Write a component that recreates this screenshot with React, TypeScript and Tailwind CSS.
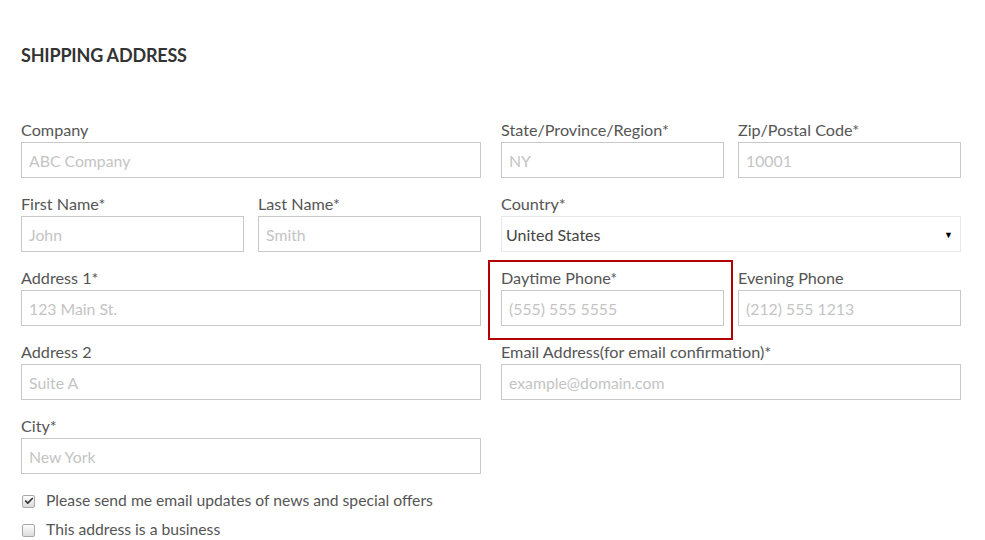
import { Check } from "lucide-react";

function Field({
  label,
  placeholder,
}: {
  label: string;
  placeholder: string;
}) {
  return (
    <div className="flex flex-col">
      <label className="text-[16.2px] leading-5 text-[#555] mb-[2px]">{label}</label>
      <div className="h-9 border border-[#c8c8c8] bg-white px-[7px] pt-[2px] flex items-center text-[15.8px] text-[#c4c4c4]">
        {placeholder}
      </div>
    </div>
  );
}

function Box({ checked }: { checked?: boolean }) {
  return (
    <span className="w-[13px] h-[13px] rounded-[2px] border border-[#a8a8a8] bg-gradient-to-b from-[#fdfdfd] to-[#dcdcdc] flex items-center justify-center">
      {checked && <Check size={10} strokeWidth={4} className="text-[#333]" />}
    </span>
  );
}

export default function App() {
  return (
    <div className="w-[985px] h-[540px] bg-white px-[21px] pt-[44px] font-['Lato',sans-serif] overflow-hidden">
      <h2 className="text-[18px] leading-[22px] font-bold text-[#333] tracking-[-0.2px]">SHIPPING ADDRESS</h2>

      <div className="w-[940px] grid grid-cols-2 gap-x-5 mt-[54px]">
        <div className="flex flex-col gap-4">
          <Field label="Company" placeholder="ABC Company" />
          <div className="grid grid-cols-2 gap-x-[14px]">
            <Field label="First Name*" placeholder="John" />
            <Field label="Last Name*" placeholder="Smith" />
          </div>
          <Field label="Address 1*" placeholder="123 Main St." />
          <Field label="Address 2" placeholder="Suite A" />
          <Field label="City*" placeholder="New York" />
        </div>

        <div className="flex flex-col gap-4">
          <div className="grid grid-cols-2 gap-x-[14px]">
            <Field label="State/Province/Region*" placeholder="NY" />
            <Field label="Zip/Postal Code*" placeholder="10001" />
          </div>
          <div className="flex flex-col">
            <label className="text-[16.2px] leading-5 text-[#555] mb-[2px]">Country*</label>
            <div className="h-9 border border-[#e8e8e8] bg-white pl-[4px] pr-[7px] pt-[2px] flex items-center justify-between text-[16px] text-[#444]">
              <span>United States</span>
              <span className="text-[9px] text-black">▼</span>
            </div>
          </div>
          <div className="grid grid-cols-2 gap-x-[14px]">
            <div className="relative">
              <Field label="Daytime Phone*" placeholder="(555) 555 5555" />
              <div className="absolute -left-[13px] -right-[9px] -top-[8px] -bottom-[14px] border-2 border-[#b30000]" />
            </div>
            <Field label="Evening Phone" placeholder="(212) 555 1213" />
          </div>
          <Field label="Email Address(for email confirmation)*" placeholder="example@domain.com" />
        </div>
      </div>

      <div className="mt-[17px] flex flex-col gap-[9px] text-[15.7px] text-[#555]">
        <div className="flex items-center gap-[11px] pl-[1px] h-5">
          <Box checked />
          <span>Please send me email updates of news and special offers</span>
        </div>
        <div className="flex items-center gap-[11px] pl-[1px] h-5">
          <Box />
          <span>This address is a business</span>
        </div>
      </div>
    </div>
  );
}
